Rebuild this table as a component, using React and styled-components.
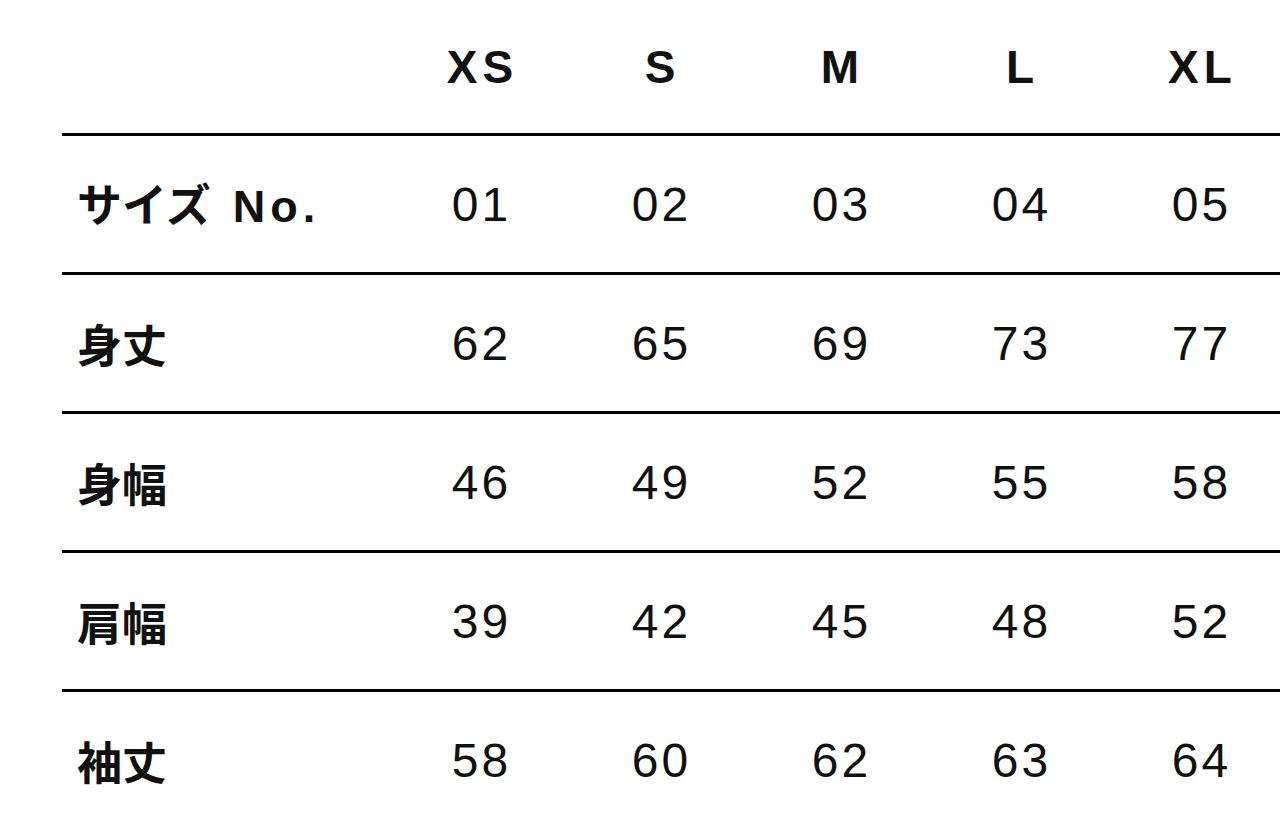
import styled, { createGlobalStyle } from "styled-components";

const GlobalStyle = createGlobalStyle`
  html, body {
    margin: 0;
    padding: 0;
    background: #ffffff;
    overflow: hidden;
  }
`;

const Page = styled.div`
  width: 1280px;
  height: 821px;
  overflow: hidden;
  padding-left: 62px;
  box-sizing: border-box;
  color: #111;
  font-family: "Liberation Sans", "Noto Sans CJK JP", sans-serif;
`;

const Grid = styled.div`
  width: 1228px;
`;

const Row = styled.div`
  display: grid;
  grid-template-columns: 328px repeat(5, 180px);
  align-items: center;
  height: ${(props) => (props.head ? "133px" : "136px")};
  ${(props) => !props.head && `border-top: 3px solid #000;`};
`;

const HeadCell = styled.div`
  text-align: center;
  font-weight: 700;
  font-size: 46px;
  letter-spacing: 5px;
  padding-left: 5px;
  line-height: 1;
`;

const Label = styled.div`
  padding-left: 15px;
  font-weight: 700;
  font-size: 45px;
  line-height: 1;
  font-family: "Noto Sans CJK JP", "Liberation Sans", sans-serif;
  white-space: nowrap;
`;

const Latin = styled.span`
  display: inline-block;
  font-family: "Liberation Sans", sans-serif;
  letter-spacing: 5px;
  margin-left: 22px;
`;

const Value = styled.div`
  text-align: center;
  font-size: 48px;
  letter-spacing: 3px;
  padding-left: 3px;
  line-height: 1;
  padding-top: 2px;
`;

const sizes = ["XS", "S", "M", "L", "XL"];

const rows = [
  { label: "サイズ", latin: "No.", values: ["01", "02", "03", "04", "05"] },
  { label: "身丈", values: ["62", "65", "69", "73", "77"] },
  { label: "身幅", values: ["46", "49", "52", "55", "58"] },
  { label: "肩幅", values: ["39", "42", "45", "48", "52"] },
  { label: "袖丈", values: ["58", "60", "62", "63", "64"] },
];

const App = () => {
  return (
    <>
      <GlobalStyle />
      <Page>
        <Grid>
          <Row head>
            <div />
            {sizes.map((size) => (
              <HeadCell key={size}>{size}</HeadCell>
            ))}
          </Row>
          {rows.map((row) => (
            <Row key={row.label}>
              <Label>
                {row.label}
                {row.latin && <Latin>{row.latin}</Latin>}
              </Label>
              {row.values.map((value, index) => (
                <Value key={index}>{value}</Value>
              ))}
            </Row>
          ))}
        </Grid>
      </Page>
    </>
  );
};

export default App;
